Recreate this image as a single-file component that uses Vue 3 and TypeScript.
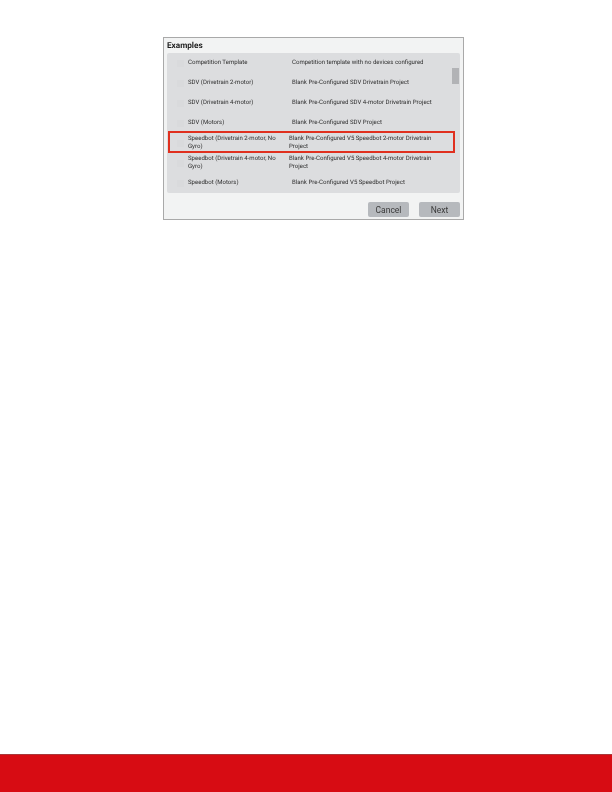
<script setup lang="ts">
interface ExampleRow {
  name: string
  description: string
  wrapped?: boolean
  selected?: boolean
}

const rows: ExampleRow[] = [
  { name: 'Competition Template', description: 'Competition template with no devices configured' },
  { name: 'SDV (Drivetrain 2-motor)', description: 'Blank Pre-Configured SDV Drivetrain Project' },
  { name: 'SDV (Drivetrain 4-motor)', description: 'Blank Pre-Configured SDV 4-motor Drivetrain Project' },
  { name: 'SDV (Motors)', description: 'Blank Pre-Configured SDV Project' },
  {
    name: 'Speedbot (Drivetrain 2-motor, No Gyro)',
    description: 'Blank Pre-Configured V5 Speedbot 2-motor Drivetrain Project',
    wrapped: true,
    selected: true,
  },
  {
    name: 'Speedbot (Drivetrain 4-motor, No Gyro)',
    description: 'Blank Pre-Configured V5 Speedbot 4-motor Drivetrain Project',
    wrapped: true,
  },
  { name: 'Speedbot (Motors)', description: 'Blank Pre-Configured V5 Speedbot Project' },
]
</script>

<template>
  <div class="page">
    <main class="content">
      <section class="dialog">
        <h2 class="title">Examples</h2>
        <div class="list">
          <div
            v-for="row in rows"
            :key="row.name"
            class="row"
            :class="{ wrapped: row.wrapped }"
          >
            <span class="icon" />
            <span class="name">{{ row.name }}</span>
            <span class="description">{{ row.description }}</span>
            <!-- Red callout around the chosen template -->
            <span v-if="row.selected" class="callout" />
          </div>
          <div class="scroll-thumb" />
        </div>
        <div class="actions">
          <button class="btn" type="button">Cancel</button>
          <button class="btn" type="button">Next</button>
        </div>
      </section>
    </main>
    <footer class="footer" />
  </div>
</template>

<style>
html,
body {
  margin: 0;
  background: #ffffff;
}
</style>

<style scoped>
.page {
  width: 612px;
  height: 792px;
  display: flex;
  flex-direction: column;
  font-family: "Roboto", "Liberation Sans", sans-serif;
  text-rendering: geometricPrecision;
}

.content {
  flex: 1;
  padding: 37px 0 0 163px;
}

.dialog {
  box-sizing: border-box;
  width: 301px;
  height: 183px;
  padding: 3px 3px 0;
  background: #f2f3f3;
  border: 1px solid #a9a9a9;
  filter: blur(0.3px);
}

.title {
  margin: 0;
  height: 12px;
  font-size: 8.2px;
  line-height: 10px;
  font-weight: 700;
  color: #1c1c1c;
}

.list {
  position: relative;
  box-sizing: border-box;
  height: 140px;
  background: #dcdddf;
  border-radius: 2px;
}

.row {
  position: relative;
  display: grid;
  grid-template-columns: 21px 104px 1fr;
  align-items: center;
  height: 20px;
  font-size: 6.05px;
  line-height: 8px;
  color: #2e2e2e;
}

.icon {
  justify-self: center;
  width: 7px;
  height: 7px;
  margin-left: 6px;
  background: #d9dadc;
}

.name {
  padding-right: 10px;
}

.description {
  padding-right: 20px;
}

.row.wrapped {
  grid-template-columns: 21px 101px 1fr;
}

.callout {
  position: absolute;
  left: 1px;
  right: 5px;
  top: -2.5px;
  bottom: 0.5px;
  border: 2.5px solid #e0301f;
}

.scroll-thumb {
  position: absolute;
  top: 15px;
  right: 1px;
  width: 7px;
  height: 16px;
  background: #b2b3b6;
}

.actions {
  display: flex;
  justify-content: flex-end;
  gap: 10px;
  padding: 9px 0 0 0;
}

.btn {
  width: 41px;
  height: 15px;
  padding: 0;
  border: 0;
  border-radius: 2px;
  background: #b6b9bd;
  font: 400 8.5px "Roboto", "Liberation Sans", sans-serif;
  color: #3a3a3a;
}

.footer {
  height: 37px;
  flex: none;
  background: #d70c13;
  border-top: 1px solid #a8383a;
}
</style>
